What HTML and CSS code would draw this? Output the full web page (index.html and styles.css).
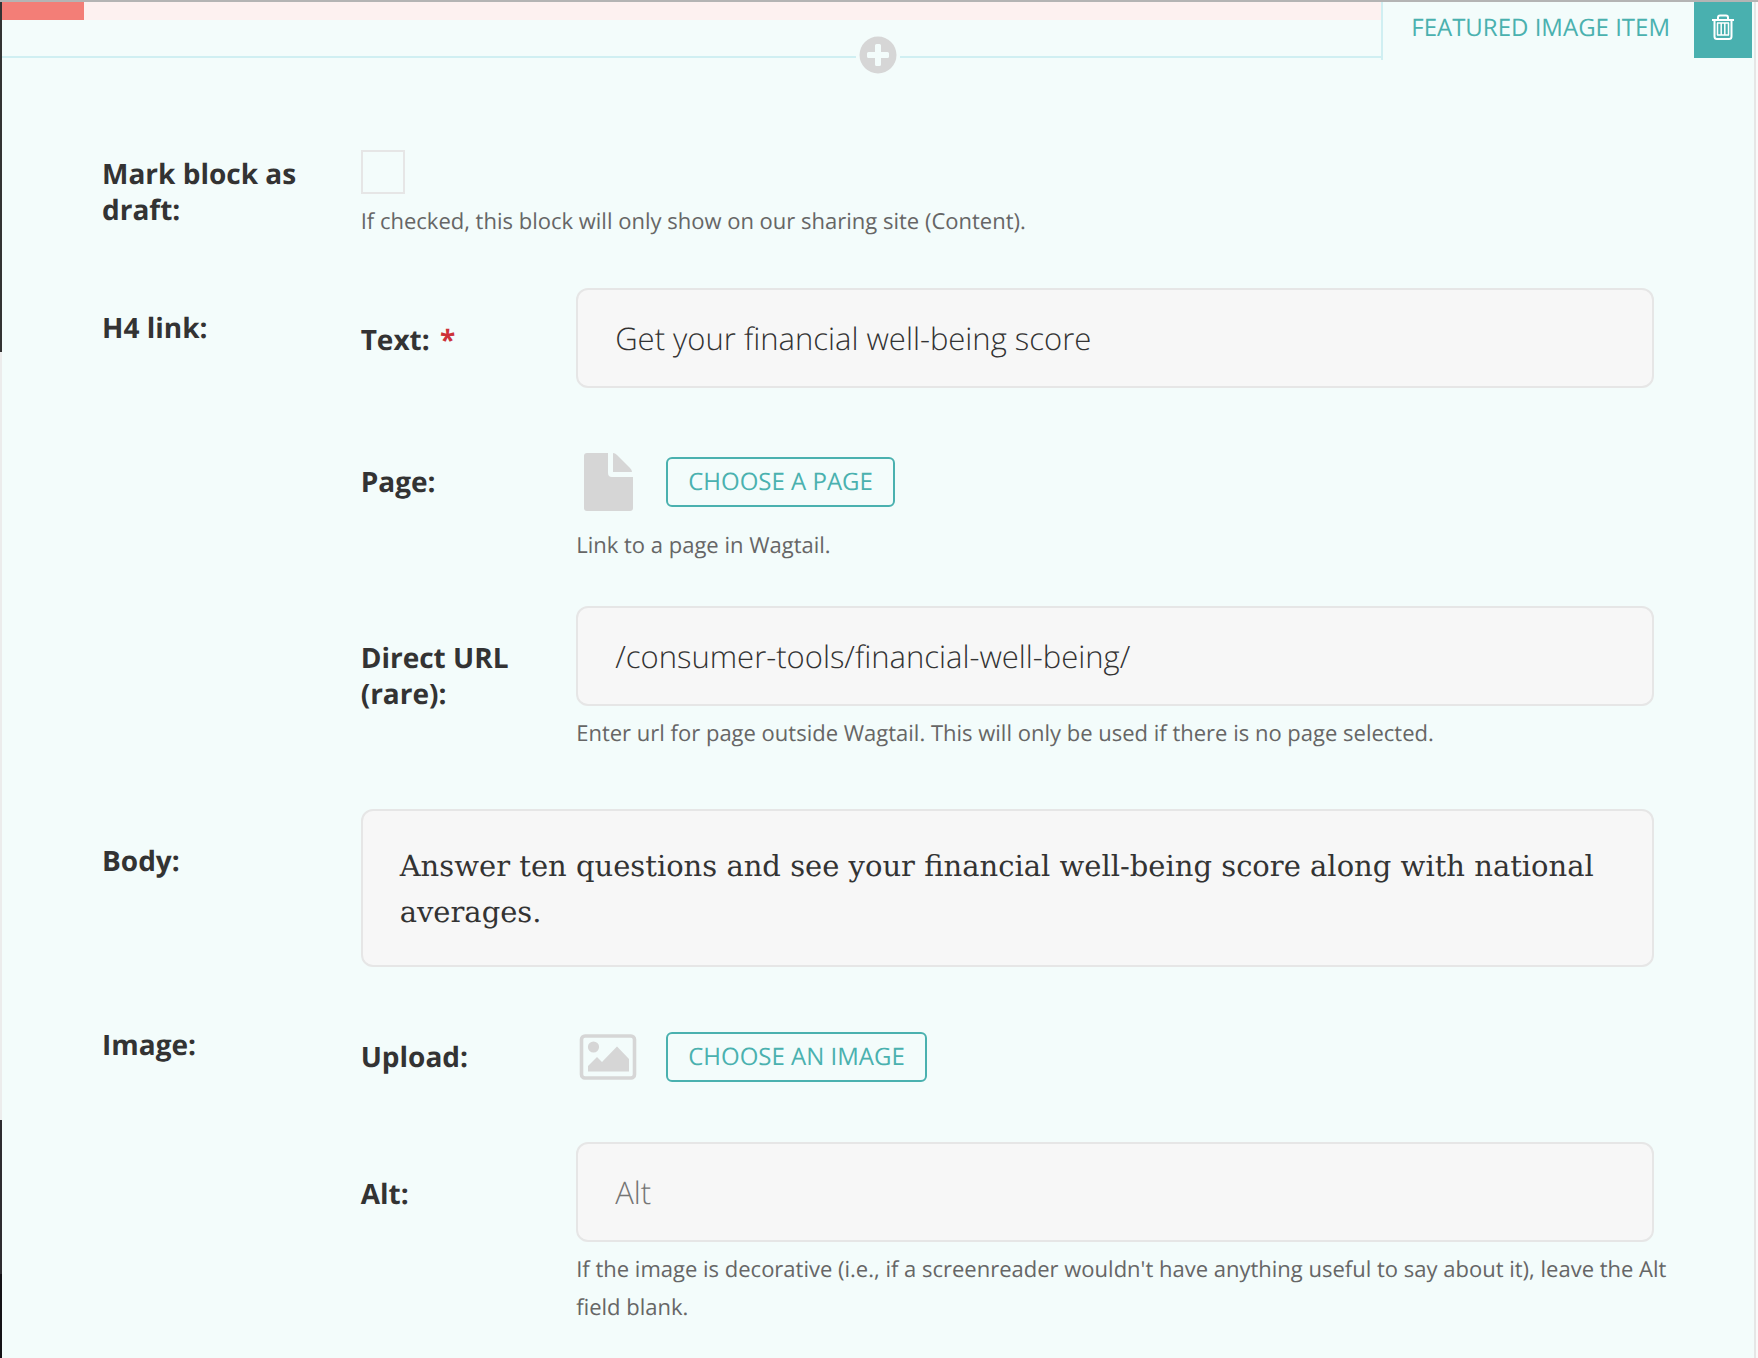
FILE: index.html
```html
<!DOCTYPE html>
<html lang="en">
<head>
<meta charset="utf-8">
<meta name="viewport" content="width=device-width, initial-scale=1">
<title>Featured image item</title>
<link rel="stylesheet" href="styles.css">
</head>
<body>
<div class="page">
  <div class="sidebar-edge"></div>
  <main class="block">
    <header class="block-header">
      <div class="lane">
        <div class="progress"><div class="progress-done"></div></div>
      </div>
      <h2 class="block-title">Featured image item</h2>
      <button class="delete" type="button" aria-label="Delete">
        <svg width="24" height="26" viewBox="0 0 24 26" fill="none" stroke="currentColor" stroke-width="2">
          <path d="M1 6h22M7 5.500V3.500Q7 1.500 9 1.500h6Q17 1.500 17 3.500V5.500"/>
          <path d="M3.500 6v16.500Q3.500 25 6 25h12Q20.500 25 20.500 22.500V6"/>
          <path d="M6.500 9v12M10.200 9v12M13.800 9v12M17.500 9v12M6 9h12M6 21h12" stroke-width="1.500"/>
        </svg>
      </button>
      <button class="add" type="button" aria-label="Insert a block">
        <svg width="38" height="38" viewBox="0 0 38 38">
          <circle cx="19" cy="19" r="18.500" fill="#d6d6d6"/>
          <path d="M16 9.500q0-1.500 1.500-1.500h3q1.500 0 1.500 1.500V16h6.500q1.500 0 1.500 1.500v3q0 1.500-1.500 1.500H22v6.500q0 1.500-1.500 1.500h-3q-1.500 0-1.500-1.500V22H9.500Q8 22 8 20.500v-3Q8 16 9.500 16H16z" fill="#f3fcfb"/>
        </svg>
      </button>
    </header>

    <form class="fields">
      <div class="field field-check">
        <label class="label" for="draft">Mark block as draft:</label>
        <div>
          <input class="check" id="draft" type="checkbox">
          <p class="help">If checked, this block will only show on our sharing site (Content).</p>
        </div>
      </div>

      <div class="field" role="group" aria-labelledby="link-label">
        <div class="label label-group" id="link-label">H4 link:</div>
        <div class="nested nested-end">
          <div class="field">
            <label class="label label-input" for="text">Text: <span class="required">*</span></label>
            <input class="input" id="text" type="text" value="Get your financial well-being score">
          </div>
          <div class="field">
            <label class="label label-input" for="page">Page:</label>
            <div>
              <div class="chooser">
                <svg class="chooser-icon" width="58" height="58" viewBox="0 0 58 58" fill="#d6d6d6">
                  <path d="M8 0H32V20Q32 24 36 24H57V55Q57 58 54 58H11Q8 58 8 55V3Q8 0 11 0z"/>
                  <path d="M37 0Q39 0 41 2L54 15Q56 17 56 19H37z"/>
                </svg>
                <button class="choose" id="page" type="button">Choose a page</button>
              </div>
              <p class="help help-chooser">Link to a page in Wagtail.</p>
            </div>
          </div>
          <div class="field">
            <label class="label label-input" for="url">Direct URL (rare):</label>
            <div>
              <input class="input" id="url" type="text" value="/consumer-tools/financial-well-being/">
              <p class="help">Enter url for page outside Wagtail. This will only be used if there is no page selected.</p>
            </div>
          </div>
        </div>
      </div>

      <div class="field">
        <label class="label label-input" for="body">Body:</label>
        <textarea class="input body-text" id="body" rows="2">Answer ten questions and see your financial well-being score along with national averages.</textarea>
      </div>

      <div class="field" role="group" aria-labelledby="image-label">
        <div class="label label-group" id="image-label">Image:</div>
        <div class="nested">
          <div class="field">
            <label class="label label-input" for="upload">Upload:</label>
            <div class="chooser">
              <svg class="chooser-icon" width="58" height="58" viewBox="0 0 58 58" overflow="visible">
                <rect x="5.500" y="8" width="53" height="42" rx="3.500" fill="none" stroke="#d6d6d6" stroke-width="3.600"/>
                <circle cx="17.500" cy="19" r="5.600" fill="#d6d6d6"/>
                <path d="M12 43.500v-5.500l9-9 5 5L41 18.500 53 31v12.500z" fill="#d6d6d6"/>
              </svg>
              <button class="choose" id="upload" type="button">Choose an image</button>
            </div>
          </div>
          <div class="field">
            <label class="label label-input" for="alt">Alt:</label>
            <div>
              <input class="input" id="alt" type="text" placeholder="Alt">
              <p class="help">If the image is decorative (i.e., if a screenreader wouldn't have anything useful to say about it), leave the Alt field blank.</p>
            </div>
          </div>
        </div>
      </div>
    </form>
  </main>
</div>
</body>
</html>
```
FILE: styles.css
```css
* {
  box-sizing: border-box;
}

body {
  margin: 0;
  background: #fafafa;
  color: #333;
  font-family: "Open Sans", "Noto Sans", sans-serif;
  text-rendering: geometricPrecision;
}

.page {
  display: flex;
  min-height: 100vh;
  padding-right: 2px;
  border-top: 2px solid #b4b4b4;
}

.sidebar-edge {
  flex: none;
  width: 2px;
  background: linear-gradient(#333 350px, #ececec 350px, #ececec 1118px, #2e2c30 1118px, #2e2c30 1272px, #141216 1272px);
}

.block {
  flex: 1;
  min-width: 0;
  background: #f3fcfb;
  border-right: 2px solid #e6e6e6;
}

.block-header {
  position: relative;
  display: flex;
  align-items: flex-start;
  padding-right: 2px;
}

.lane {
  flex: 1;
  height: 56px;
  border-bottom: 2px solid #d0eff2;
}

.progress {
  height: 18px;
  background: #fdf1f0;
}

.progress-done {
  width: 82px;
  height: 18px;
  background: #f37e77;
}

.block-title {
  height: 58px;
  margin: 0;
  padding: 0 24px 0 28px;
  border-left: 2px solid #d0eff2;
  color: #4ab1af;
  font-size: 24px;
  font-weight: 400;
  line-height: 52px;
  text-transform: uppercase;
}

.delete {
  display: flex;
  align-items: center;
  justify-content: center;
  width: 58px;
  height: 56px;
  padding: 0 0 6px;
  border: 0;
  background: #49b0af;
  color: #fff;
}

.add {
  position: absolute;
  top: 34px;
  left: 50%;
  display: flex;
  padding: 0 3px;
  border: 0;
  background: #f3fcfb;
  transform: translateX(-50%);
}

.fields {
  display: grid;
  gap: 38px;
  padding: 90px 100px 30px;
}

.field {
  display: grid;
  grid-template-columns: minmax(0, 1fr) minmax(0, 5fr);
  align-items: start;
}

.field-check {
  padding-bottom: 10px;
}

.nested {
  display: grid;
  gap: 42px;
}

.nested-end {
  padding-bottom: 19px;
}

.label {
  padding: 6px 30px 0 0;
  font-size: 28px;
  font-weight: 700;
  line-height: 36px;
}

.label-group {
  padding-top: 22px;
}

.label-input {
  padding-top: 34px;
}

.required {
  margin-left: 3px;
  color: #cd3238;
}

.help {
  margin: 8px -20px 0 0;
  color: #666;
  font-size: 22px;
  line-height: 38px;
}

.help-chooser {
  margin-top: 15px;
}

.check {
  display: block;
  width: 44px;
  height: 44px;
  margin: 0;
  border: 2px solid #e6e6e6;
  appearance: none;
}

.input {
  display: block;
  width: 100%;
  height: 100px;
  padding: 2px 37px 0;
  border: 2px solid #e6e6e6;
  border-radius: 12px;
  background: #f7f7f7;
  color: #333;
  font-family: inherit;
  font-size: 31px;
  font-weight: 300;
  text-rendering: inherit;
}

.input::placeholder {
  color: #757575;
}

.body-text {
  height: 158px;
  padding: 32px 37px;
  font-family: "Roboto Slab", "DejaVu Serif", serif;
  font-size: 29px;
  font-weight: 400;
  line-height: 46px;
  overflow: hidden;
  resize: none;
}

.chooser {
  display: flex;
  align-items: center;
  padding-top: 23px;
}

.field > .chooser {
  padding-bottom: 14px;
}

.chooser-icon {
  flex: none;
  margin-right: 32px;
}

.choose {
  height: 50px;
  padding: 0 20px 2px;
  border: 2px solid #4ab1af;
  border-radius: 6px;
  background: transparent;
  color: #4ab1af;
  font-family: inherit;
  font-size: 24px;
  font-weight: 500;
  text-rendering: inherit;
  text-transform: uppercase;
}
```
